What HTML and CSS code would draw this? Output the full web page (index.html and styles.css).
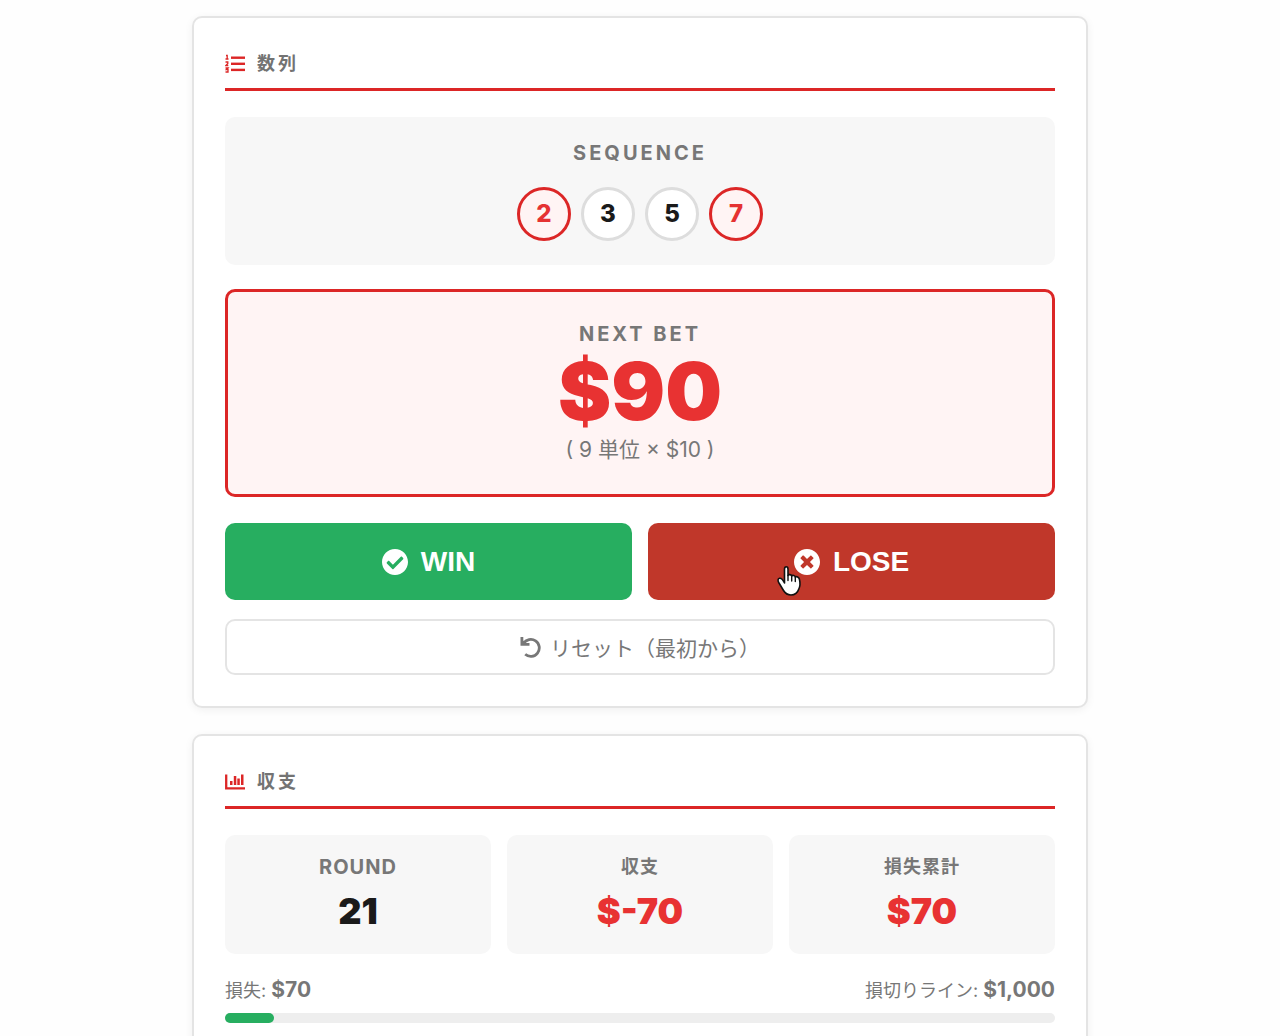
FILE: index.html
```html
<!DOCTYPE html>
<html lang="ja">
<head>
<meta charset="utf-8">
<meta name="viewport" content="width=device-width, initial-scale=1">
<title>数列</title>
<link rel="stylesheet" href="styles.css">
</head>
<body>
<main class="page">
  <section class="card">
    <h2 class="card-title">
      <svg class="title-icon" viewBox="0 0 20 20" aria-hidden="true">
        <g fill="currentColor"><rect x="6" y="2.500" width="14" height="2.400"/><rect x="6" y="8.600" width="14" height="2.400"/><rect x="6" y="14.700" width="14" height="2.400"/></g>
        <path d="M1 1.500h1.200v3.500M0.500 5h3M0.500 8h2.300v1.500l-2 2h2.500M0.500 14h2.500l-1.500 1.500h1.500v2.500h-2.500" fill="none" stroke="currentColor" stroke-width="1.300"/>
      </svg>
      数列
    </h2>
    <div class="panel sequence">
      <h3 class="label wide">SEQUENCE</h3>
      <ol class="numbers">
        <li class="number edge">2</li>
        <li class="number">3</li>
        <li class="number">5</li>
        <li class="number edge">7</li>
      </ol>
    </div>
    <div class="bet">
      <h3 class="label wide">NEXT BET</h3>
      <p class="bet-value">$90</p>
      <p class="bet-note">( 9 単位 × $10 )</p>
    </div>
    <div class="actions">
      <button class="action win" type="button">
        <svg class="action-icon" viewBox="8 8 496 496" aria-hidden="true"><path fill="currentColor" d="M504 256c0 136.967-111.033 248-248 248S8 392.967 8 256 119.033 8 256 8s248 111.033 248 248zM227.314 387.314l184-184c6.248-6.248 6.248-16.379 0-22.627l-22.627-22.627c-6.248-6.249-16.379-6.249-22.628 0L216 308.118l-70.059-70.059c-6.248-6.248-16.379-6.248-22.628 0l-22.627 22.627c-6.248 6.248-6.248 16.379 0 22.627l104 104c6.249 6.249 16.379 6.249 22.628.001z"/></svg>
        WIN
      </button>
      <button class="action lose" type="button">
        <svg class="action-icon" viewBox="8 8 496 496" aria-hidden="true"><path fill="currentColor" d="M256 8C119 8 8 119 8 256s111 248 248 248 248-111 248-248S393 8 256 8zm121.6 313.1c4.7 4.7 4.7 12.3 0 17L338 377.600c-4.7 4.7-12.3 4.7-17 0L256 312l-65.1 65.6c-4.7 4.7-12.3 4.7-17 0L134.4 338c-4.7-4.7-4.7-12.3 0-17l65.6-65-65.6-65.1c-4.7-4.7-4.7-12.3 0-17l39.6-39.6c4.7-4.7 12.3-4.7 17 0l65 65.7 65.1-65.6c4.7-4.7 12.3-4.7 17 0l39.6 39.6c4.7 4.7 4.7 12.3 0 17L312 256l65.6 65.1z"/></svg>
        LOSE
        <svg class="pointer" viewBox="0 0 26 32" aria-hidden="true">
          <path d="M7.500 18V4.200C7.500 1 11 1 11 4.200V10.500C11.500 9.200 14.300 9.300 14.700 11C15.500 9.900 18 10.400 18.300 12C19.500 11.200 22 12 22.500 14.500C23.300 18 23.300 21 21.800 24C20.500 28 17.500 30 14 30C10.500 30 8 28 6.500 25.500L2 18C0.500 15.300 0.800 13.700 2.500 13.300C4.700 12.800 6 15 7.500 18Z" fill="#fff" stroke="#111" stroke-width="1.600" stroke-linejoin="round"/>
          <path d="M11 10.500v5M14.700 11.500v4.500M18.300 12.500v4" fill="none" stroke="#111" stroke-width="1.400" stroke-linecap="round"/>
        </svg>
      </button>
    </div>
    <button class="reset" type="button">
      <svg class="reset-icon" viewBox="0 0 22 22" aria-hidden="true">
        <path d="M3.500 7.500A8.500 8.500 0 1 1 5.200 18.300" fill="none" stroke="currentColor" stroke-width="2.800"/>
        <path d="M0.500 1v8.800h9v-2.900H6L3.300 4.500V1z" fill="currentColor"/>
      </svg>
      リセット（最初から）
    </button>
  </section>

  <section class="card">
    <h2 class="card-title">
      <svg class="title-icon" viewBox="0 0 20 20" aria-hidden="true">
        <path d="M1.200 2.500v13.800H20" fill="none" stroke="currentColor" stroke-width="2.300"/>
        <g fill="currentColor"><rect x="5" y="9" width="2.500" height="4"/><rect x="8.800" y="4" width="2.500" height="9"/><rect x="12.300" y="6.500" width="2.500" height="6.500"/><rect x="16" y="2.500" width="2.500" height="10.500"/></g>
      </svg>
      収支
    </h2>
    <dl class="stats">
      <div class="panel stat"><dt class="label latin">ROUND</dt><dd class="stat-value">21</dd></div>
      <div class="panel stat"><dt class="label">収支</dt><dd class="stat-value negative">$-70</dd></div>
      <div class="panel stat"><dt class="label">損失累計</dt><dd class="stat-value negative">$70</dd></div>
    </dl>
    <div class="limits">
      <span>損失: <strong>$70</strong></span>
      <span>損切りライン: <strong>$1,000</strong></span>
    </div>
    <div class="bar"><div class="bar-fill"></div></div>
  </section>
</main>
</body>
</html>
```
FILE: styles.css
```css
* { box-sizing: border-box; margin: 0; padding: 0; }

body {
  background: #fefefe;
  color: #1a1a1a;
  font-family: Inter, "Noto Sans CJK JP", sans-serif;
}

.page {
  display: flex;
  flex-direction: column;
  gap: 26px;
  width: 100%;
  max-width: 896px;
  margin: 0 auto;
  padding: 16px 0;
}

.card {
  padding: 31px;
  background: #fff;
  border: 2px solid #e4e4e4;
  border-radius: 10px;
  box-shadow: 0 2px 8px rgba(0, 0, 0, 0.06);
}

.card-title {
  display: flex;
  align-items: center;
  gap: 12px;
  margin-bottom: 26px;
  padding: 1px 0 10px;
  border-bottom: 3px solid #dc2626;
  color: #737373;
  font-size: 18px;
  font-weight: 700;
  line-height: 28px;
  letter-spacing: 3px;
}

.title-icon { width: 20px; height: 20px; color: #dc2626; }

.panel {
  background: #f7f7f7;
  border-radius: 10px;
  text-align: center;
}

.sequence { padding: 24px; }

.label {
  color: #777;
  font-size: 18px;
  font-weight: 700;
  line-height: 24px;
  letter-spacing: 1px;
}

.label.latin { font-size: 20px; }
.label.wide { font-size: 20px; letter-spacing: 3px; }

.numbers {
  display: flex;
  justify-content: center;
  gap: 10px;
  margin-top: 22px;
  list-style: none;
}

.number {
  width: 54px;
  height: 54px;
  background: #fff;
  border: 3px solid #ddd;
  border-radius: 50%;
  font-size: 24px;
  font-weight: 800;
  line-height: 48px;
}

.number.edge { background: #fff4f4; border-color: #dc2626; color: #e53232; }

.bet {
  margin-top: 24px;
  padding: 30px;
  background: #fff4f4;
  border: 3px solid #dc2626;
  border-radius: 10px;
  text-align: center;
}

.bet-value {
  color: #e83232;
  font-size: 80px;
  font-weight: 900;
  line-height: 90px;
}

.bet-note { color: #777; font-size: 21px; line-height: 28px; }

.actions {
  display: grid;
  grid-template-columns: 1fr 1fr;
  gap: 16px;
  margin-top: 26px;
}

.action {
  position: relative;
  display: flex;
  align-items: center;
  justify-content: center;
  gap: 13px;
  padding: 20px;
  border: 0;
  border-radius: 10px;
  color: #fff;
  font: 700 28px/37px "Liberation Sans", sans-serif;
  cursor: pointer;
}

.action-icon { width: 26px; height: 26px; }
.win { background: #27ae60; }
.lose { background: #c0372a; }

.pointer {
  position: absolute;
  top: 42px;
  right: 62%;
  width: 26px;
  height: 32px;
}

.reset {
  display: flex;
  align-items: center;
  justify-content: center;
  gap: 8px;
  width: 100%;
  margin-top: 19px;
  padding: 12px;
  background: #fff;
  border: 2px solid #e4e4e4;
  border-radius: 10px;
  color: #777;
  font: 400 21px/28px "Noto Sans CJK JP", sans-serif;
  cursor: pointer;
}

.reset-icon { width: 22px; height: 22px; }

.stats {
  display: grid;
  grid-template-columns: repeat(3, 1fr);
  gap: 16px;
}

.stat { padding: 20px; }

.stat-value {
  margin-top: 10px;
  font-size: 36px;
  font-weight: 900;
  line-height: 45px;
}

.negative { color: #e83232; }

.limits {
  display: flex;
  justify-content: space-between;
  margin-top: 22px;
  color: #777;
  font-size: 18px;
  line-height: 28px;
}

.limits strong { font-size: 21px; font-weight: 700; }

.bar {
  height: 10px;
  margin-top: 8px;
  background: #eee;
  border-radius: 5px;
}

.bar-fill { width: 49px; height: 10px; background: #27ae60; border-radius: 5px; }
```
